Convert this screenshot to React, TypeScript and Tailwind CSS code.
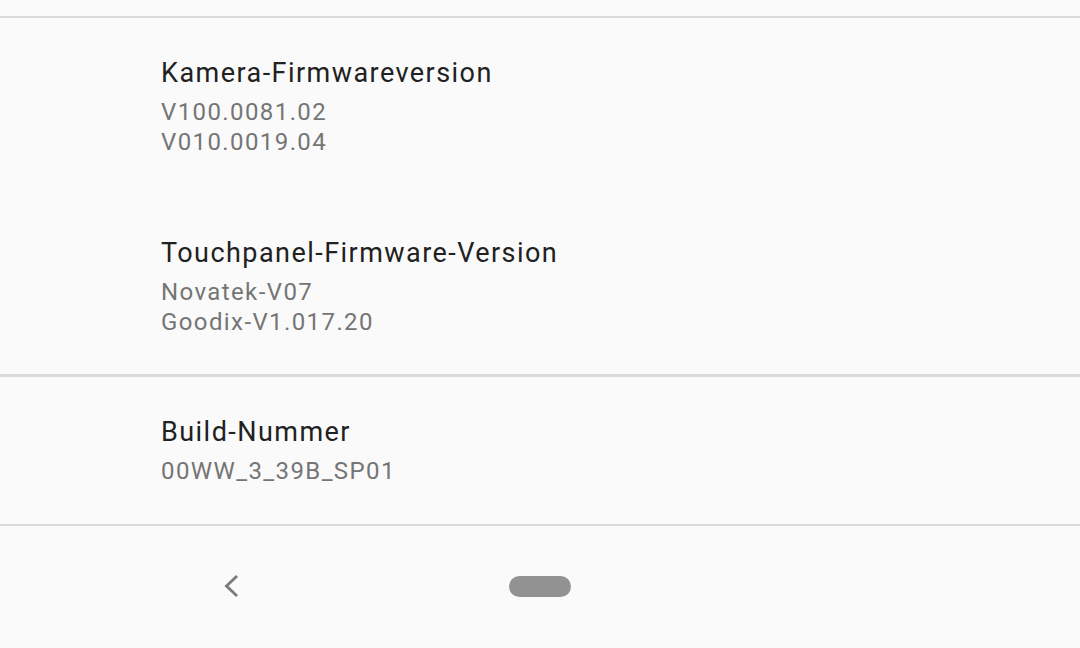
const items = [
  { title: "Kamera-Firmwareversion", lines: ["V100.0081.02", "V010.0019.04"], pad: "pt-[39px] pb-[39px]" },
  { title: "Touchpanel-Firmware-Version", lines: ["Novatek-V07", "Goodix-V1.017.20"], pad: "pt-[41px] pb-[37px]" },
];

function Item({ title, lines, pad }: { title: string; lines: string[]; pad: string }) {
  return (
    <div className={`pl-[161px] pr-6 ${pad}`}>
      <div className="text-[27px] leading-[32px] tracking-[1.45px] text-[#212121]">{title}</div>
      <div className="mt-[8px] text-[24px] leading-[30px] tracking-[1.4px] text-[#757575]">
        {lines.map((l) => (
          <div key={l}>{l}</div>
        ))}
      </div>
    </div>
  );
}

export default function App() {
  return (
    <div
      className="w-[1080px] h-[648px] bg-[#fafafa] overflow-hidden flex flex-col"
      style={{ fontFamily: "Roboto, sans-serif" }}
    >
      <div className="h-[16px] shrink-0" />
      <div className="h-[2px] bg-[#dcdcdc] shrink-0" />
      {items.map((it) => (
        <Item key={it.title} {...it} />
      ))}
      <div className="h-[3px] bg-[#dcdcdc] shrink-0" />
      <Item title="Build-Nummer" lines={["00WW_3_39B_SP01"]} pad="pt-[39px] pb-[38px]" />
      <div className="h-[2px] bg-[#dcdcdc] shrink-0" />

      {/* navigation bar */}
      <div className="flex-1 flex items-center pb-[2px]">
        <svg
          width="24"
          height="24"
          viewBox="0 0 24 24"
          className="ml-[219px] shrink-0"
          fill="none"
          stroke="#7a7a7a"
          strokeWidth="2.8"
          strokeLinecap="square"
        >
          <path d="M17 3 L7.5 12 L17 21" />
        </svg>
        <div className="ml-[266px] w-[62px] h-[21px] rounded-full bg-[#929292]" />
      </div>
    </div>
  );
}
